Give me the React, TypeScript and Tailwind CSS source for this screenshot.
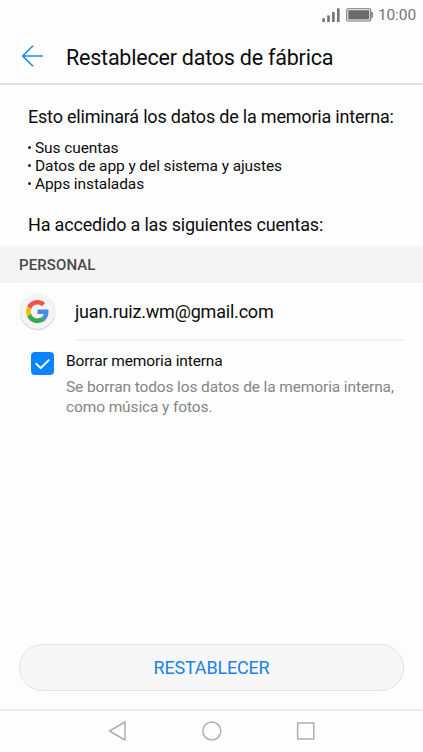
import React from "react";

const erasedItems = ["Sus cuentas", "Datos de app y del sistema y ajustes", "Apps instaladas"];

const StatusBar: React.FC = () => (
  <div className="flex h-[30px] items-center justify-end pr-[7px]">
    <svg width="18" height="15" viewBox="0 0 18 15" className="mr-[6px]" fill="#737373">
      <rect x="0.3" y="10.3" width="2.6" height="3.7" />
      <rect x="5.2" y="7.4" width="2.6" height="6.6" />
      <rect x="10.1" y="4" width="2.6" height="10" />
      <rect x="15" y="0.3" width="2.6" height="13.7" />
    </svg>
    <svg width="27" height="14" viewBox="0 0 27 14" className="mr-[5px]">
      <rect x="0.75" y="0.75" width="24" height="12.2" rx="1.5" fill="none" stroke="#737373" strokeWidth="1.1" />
      <rect x="2.3" y="2.2" width="21" height="9.3" fill="#6b6b6b" />
      <rect x="25.2" y="4" width="1.6" height="5.6" fill="#737373" />
    </svg>
    <span className="pt-[2px] text-[15.5px] leading-none tracking-[-0.1px] text-[#757575]">10:00</span>
  </div>
);

const GoogleLogo: React.FC = () => (
  <div className="mb-[2px] flex size-[35px] items-center justify-center rounded-full bg-[#f4f4f4] shadow-[0_1px_1px_rgba(0,0,0,0.18),0_0_1px_rgba(0,0,0,0.12)]">
    <svg width="23" height="23" viewBox="0 0 48 48">
      <path fill="#EA5545" d="M24 9.5c3.54 0 6.71 1.22 9.21 3.6l6.85-6.85C35.9 2.38 30.47 0 24 0 14.62 0 6.51 5.38 2.56 13.22l7.98 6.19C12.43 13.72 17.74 9.5 24 9.5z" />
      <path fill="#4A8AF0" d="M46.98 24.55c0-1.57-.15-3.09-.38-4.55H24v9.02h12.94c-.58 2.96-2.26 5.48-4.78 7.18l7.73 6c4.51-4.18 7.09-10.36 7.09-17.65z" />
      <path fill="#FBBC05" d="M10.53 28.59c-.48-1.45-.76-2.99-.76-4.59s.27-3.14.76-4.59l-7.98-6.19C.92 16.46 0 20.12 0 24c0 3.88.92 7.54 2.56 10.78l7.97-6.19z" />
      <path fill="#34A853" d="M24 48c6.48 0 11.93-2.13 15.89-5.81l-7.73-6c-2.15 1.45-4.92 2.3-8.16 2.3-6.26 0-11.57-4.22-13.47-9.91l-7.98 6.19C6.51 42.62 14.62 48 24 48z" />
    </svg>
  </div>
);

const NavBar: React.FC = () => (
  <nav className="flex h-[43px] items-center justify-center gap-[72px] border-t-2 border-[#ededed] pb-[2px]">
    <svg width="22" height="22" viewBox="0 0 22 22" fill="none" stroke="#b0b0b0" strokeWidth="1.5" strokeLinejoin="round">
      <path d="M2.6 11 18 2v18z" />
    </svg>
    <svg width="22" height="22" viewBox="0 0 22 22" fill="none" stroke="#b0b0b0" strokeWidth="1.5">
      <circle cx="10.8" cy="11" r="9" />
    </svg>
    <svg width="22" height="22" viewBox="0 0 22 22" fill="none" stroke="#b0b0b0" strokeWidth="1.5" strokeLinejoin="round">
      <rect x="2.6" y="2.9" width="16.2" height="16.2" />
    </svg>
  </nav>
);

const App: React.FC = () => {
  return (
    <div className="flex h-[752px] w-[423px] flex-col overflow-hidden bg-[#fdfdfd] font-['Roboto',sans-serif] text-[#0c0c0c]">
      <StatusBar />
      <header className="flex h-[55px] items-center border-b-2 border-[#e1e1e1] pl-[21px]">
        <button aria-label="Atrás" className="mb-px">
          <svg width="23" height="22" viewBox="0 0 23 22" fill="none" stroke="#1f87f2" strokeWidth="1.6">
            <path d="M22 11H1.7M12 .8 1.7 11 12 21.2" />
          </svg>
        </button>
        <h1 className="ml-[22px] pt-[3px] text-[21.5px] leading-6 tracking-[-0.22px] whitespace-nowrap">Restablecer datos de fábrica</h1>
      </header>

      <main className="flex flex-1 flex-col">
        <section className="h-[161px] px-7 pt-5">
          <p className="text-[18px] leading-6 tracking-[-0.2px] whitespace-nowrap">Esto eliminará los datos de la memoria interna:</p>
          <ul className="mt-[10px] text-[15.5px] leading-[18px] tracking-[-0.1px]">
            {erasedItems.map((item) => (
              <li key={item} className="flex items-center">
                <span className="mr-1 mb-[2px] size-[3px] rounded-full bg-[#222]" />
                {item}
              </li>
            ))}
          </ul>
          <p className="mt-5 text-[18px] leading-6 tracking-[-0.18px] whitespace-nowrap">Ha accedido a las siguientes cuentas:</p>
        </section>

        <h2 className="flex h-[37px] items-center bg-[#f4f4f4] pt-[2px] pl-[19px] text-[15px] font-medium tracking-[0.1px] text-[#484848]">PERSONAL</h2>

        <div className="flex h-[58px] items-center pl-5">
          <GoogleLogo />
          <div className="mr-[19px] ml-5 flex h-full flex-1 items-center border-b-2 border-[#f2f2f2] text-[18px] tracking-[-0.2px]">
            juan.ruiz.wm@gmail.com
          </div>
        </div>

        <label className="flex pt-[10px] pl-[31px]">
          <span className="mt-px flex size-[23px] shrink-0 items-center justify-center rounded bg-[#0a84ff]">
            <svg width="17" height="14" viewBox="0 0 17 14" fill="none" stroke="#fff" strokeWidth="2">
              <path d="M1.7 6.3 6.7 11.2 15.3 2.6" />
            </svg>
          </span>
          <span className="ml-3 flex flex-col whitespace-nowrap">
            <span className="text-[15.5px] leading-5 tracking-[-0.14px]">Borrar memoria interna</span>
            <span className="mt-[6px] text-[15.5px] leading-5 tracking-[-0.12px] text-[#858585]">
              Se borran todos los datos de la memoria interna,
              <br />
              como música y fotos.
            </span>
          </span>
        </label>

        <button className="mx-[19px] mt-auto mb-[18px] h-[47px] rounded-full border border-[#e2e2e2] bg-[#f7f7f7] text-[18px] tracking-[-0.2px] text-[#1a82e8]">
          RESTABLECER
        </button>
      </main>

      <NavBar />
    </div>
  );
};

export default App;
